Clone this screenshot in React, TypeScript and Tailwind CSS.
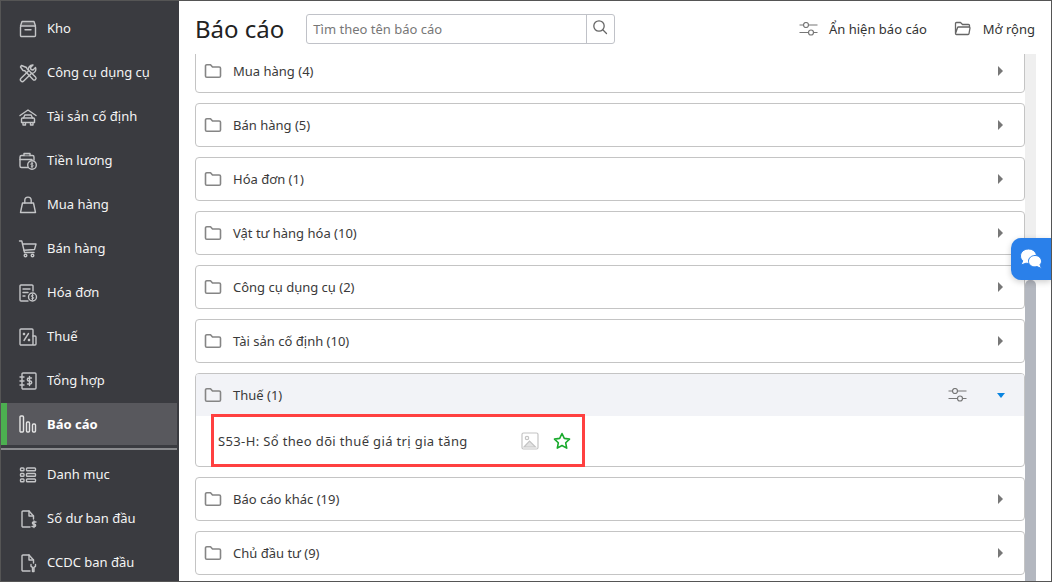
import React from "react";

const S = ({ children, className = "" }: { children: React.ReactNode; className?: string }) => (
  <svg width={20} height={20} viewBox="0 0 20 20" fill="none" stroke="currentColor" strokeWidth={1.4} strokeLinecap="round" strokeLinejoin="round" className={className}>
    {children}
  </svg>
);

const icons: Record<string, React.ReactNode> = {
  kho: (<><path d="M2.500 7 4 2.500h12L17.500 7" fill="#55565a" /><rect x="2.500" y="7" width="15" height="10.500" rx="1" /><path d="M7 10.800h6" /></>),
  tool: (<><path d="M3.500 2.500 2.500 4l2.500 3.500 1.800.3L15 16.500a1.700 1.700 0 0 0 2.500-2.500L9 5.800 8.500 4.500 3.500 2.500Z" /><path d="M17.500 4.500 15 7l-2-.5-.5-2L15 2a4.300 4.300 0 0 0-4.300 5.800L3 15.300A1.900 1.900 0 0 0 5.700 18l7.700-7.600a4.300 4.300 0 0 0 4.100-5.900Z" /></>),
  car: (<><path d="M2 8.500 10 3l8 5.500" /><path d="M5.500 11 6.800 8h6.400l1.300 3" /><path d="M3.500 12a1 1 0 0 1 1-1h11a1 1 0 0 1 1 1v3.500h-13ZM5 15.500V18h2.500v-2.500M12.500 15.500V18H15v-2.500" /></>),
  salary: (<><path d="M10 16.500H3.500a1.500 1.500 0 0 1-1.500-1.500V6a1.500 1.500 0 0 1 1.500-1.500h11A1.500 1.500 0 0 1 16 6v3" /><path d="M6 4.500V2.500h6v2" fill="#55565a" /><path d="M2 8.500h12" /><circle cx="14" cy="14" r="4.300" /><path d="M14.800 12.300h-1.400a.9.900 0 0 0 0 1.700h1.200a.9.900 0 0 1 0 1.700h-1.400M14 11.300v5.400" strokeWidth="1" /></>),
  bag: (<><path d="M4.500 8 2.500 17.500h15L15.500 8h-11Z" /><path d="M6.800 8V5.300a3.200 3.200 0 0 1 6.400 0V8" /></>),
  cart: (<><path d="M1.500 2H3.800L6.500 13.500h9.500" /><path d="M4.500 5H18l-1.500 5.500-10.500.8" /><circle cx="7.500" cy="16.500" r="1.300" /><circle cx="14.500" cy="16.500" r="1.300" /></>),
  invoice: (<><path d="M15 8V3a1 1 0 0 0-1-1H3a1 1 0 0 0-1 1v14a1 1 0 0 0 1 1h7" /><path d="M5 6h7M5 9.500h5M5 13h2" /><circle cx="14.500" cy="14" r="4" /><path d="M15.300 12.300h-1.400a.9.900 0 0 0 0 1.700h1.200a.9.900 0 0 1 0 1.700h-1.400M14.500 11.300v5.400" strokeWidth="1" /></>),
  tax: (<><rect x="2" y="2" width="13" height="16" rx="1" /><path d="M15 9h2a1 1 0 0 1 1 1v7a1 1 0 0 1-1 1h-2M6 13.500 10.500 6.500" /><path d="M5.500 6.500h1v1h-1ZM10.500 12.500h1v1h-1Z" /></>),
  book: (<><rect x="4" y="2" width="14" height="16" rx="1" /><path d="M2 6h4M2 10h4M2 14h4" /><path d="M13.500 7h-2.700a1.400 1.400 0 0 0 0 3h1.400a1.400 1.400 0 0 1 0 3H9.500M11.500 5.500v9" /></>),
  chart: (<><rect x="2" y="2" width="3.500" height="16" rx="1" /><rect x="8.500" y="8" width="3" height="10" rx="1" /><rect x="14.500" y="10" width="3" height="8" rx="1" /></>),
  list: (<><rect x="2.500" y="3" width="3.500" height="2.800" rx=".8" /><rect x="2.500" y="8.500" width="3.500" height="2.800" rx=".8" /><rect x="2.500" y="14" width="3.500" height="2.800" rx=".8" /><rect x="8.500" y="3" width="9" height="2.800" rx=".8" /><rect x="8.500" y="8.500" width="9" height="2.800" rx=".8" /><rect x="8.500" y="14" width="9" height="2.800" rx=".8" /></>),
  docDollar: (<><path d="M12 18H5a1 1 0 0 1-1-1V3a1 1 0 0 1 1-1h6l4.500 5v3" /><path d="M11 2v5h4.500" /><path d="M18 13h-2.500a1 1 0 0 0 0 2.200h1a1 1 0 0 1 0 2.300H14M16 12v6.500" /></>),
  docTool: (<><path d="M12 18H5a1 1 0 0 1-1-1V3a1 1 0 0 1 1-1h6l4.500 5v3" /><path d="M11 2v5h4.500" /><path d="M13 11.500v1.800l1.500 1V18.500h1.500v-4.200l1.500-1v-1.800" /></>),
};

const nav = [
  ["kho", "Kho"],
  ["tool", "Công cụ dụng cụ"],
  ["car", "Tài sản cố định"],
  ["salary", "Tiền lương"],
  ["bag", "Mua hàng"],
  ["cart", "Bán hàng"],
  ["invoice", "Hóa đơn"],
  ["tax", "Thuế"],
  ["book", "Tổng hợp"],
];
const nav2 = [
  ["list", "Danh mục"],
  ["docDollar", "Số dư ban đầu"],
  ["docTool", "CCDC ban đầu"],
];

const NavItem = ({ icon, label }: { icon: string; label: string }) => (
  <div className="flex h-[44px] shrink-0 items-center pl-[17px] text-[#f4f4f4]">
    <S className="h-[20px] w-[20px] text-[#c4c5c7]">{icons[icon]}</S>
    <span className="ml-[9px] text-[13px]">{label}</span>
  </div>
);

const Folder = () => (
  <svg width="18" height="16" viewBox="0 0 18 16" fill="none" stroke="#858585" strokeWidth="1.600" strokeLinejoin="round" className="shrink-0">
    <path d="M1.500 13V3a1.300 1.300 0 0 1 1.300-1.300h3.700L8.500 4h6.700a1.300 1.300 0 0 1 1.300 1.300V13a1.300 1.300 0 0 1-1.300 1.300H2.800A1.300 1.300 0 0 1 1.500 13Z" />
  </svg>
);

const Sliders = () => (
  <svg width="19" height="14" viewBox="0 0 19 14" fill="none" stroke="#777" strokeWidth="1.200" className="shrink-0">
    <circle cx="7" cy="3" r="2.500" />
    <circle cx="12" cy="10.500" r="2.500" />
    <path d="M.5 3h4M9.500 3h9M.5 10.500h9M14.500 10.500h4" />
  </svg>
);

const RightTri = () => <div className="h-0 w-0 border-y-[5px] border-l-[5px] border-y-transparent border-l-[#777]" />;

const Row = ({ label }: { label: string }) => (
  <div className="flex h-[44px] shrink-0 items-center rounded-[4px] border border-[#c4c4c4] bg-white pl-[8px] pr-[21px]">
    <Folder />
    <span className="ml-[11px] flex-1 pt-[2px] text-[13px] text-[#3a3a3a]">{label}</span>
    <RightTri />
  </div>
);

export default function App() {
  return (
    <div
      className="flex h-[582px] w-[1052px] overflow-hidden border border-[#555] bg-white"
      style={{ fontFamily: '"Noto Sans", sans-serif' }}
    >
      <aside className="flex w-[178px] shrink-0 flex-col overflow-hidden bg-[#3a3b40] pt-[6px]">
        {nav.map(([i, l]) => <NavItem key={l} icon={i} label={l} />)}
        <div className="mr-[2px] flex h-[42px] shrink-0 items-center bg-[#58585d] text-white">
          <div className="h-full w-[6px] bg-[#4caf50]" />
          <S className="ml-[11px] h-[20px] w-[20px] text-[#e4e4e4]">{icons.chart}</S>
          <span className="ml-[9px] pt-[2px] text-[13px] font-bold">Báo cáo</span>
        </div>
        <div className="mr-[2px] mt-[3px] h-[2px] shrink-0 bg-[#8a8b8e]" />
        <div className="mt-[3px] flex flex-col">
          {nav2.map(([i, l]) => <NavItem key={l} icon={i} label={l} />)}
        </div>
      </aside>

      <main className="relative flex min-w-0 flex-1 flex-col">
        <header className="flex h-[53px] shrink-0 items-center pl-[16px] pr-[16px] pt-[2px]">
          <h1 className="text-[24px] font-normal leading-none text-[#222]">Báo cáo</h1>
          <div className="ml-[22px] flex h-[30px] w-[309px] items-center rounded-[3px] border border-[#c0c2c8]">
            <span className="flex-1 pl-[6px] pt-[3px] text-[13px] text-[#777]">Tìm theo tên báo cáo</span>
            <div className="flex h-full w-[28px] items-center justify-center border-l border-[#c0c2c8] pb-[3px] pr-[2px]">
              <svg width="16" height="16" viewBox="0 0 16 16" fill="none" stroke="#666" strokeWidth="1.300" strokeLinecap="round">
                <circle cx="7" cy="7" r="5.200" />
                <path d="m11 11 3.500 3.500" />
              </svg>
            </div>
          </div>
          <div className="ml-auto flex items-center">
            <Sliders />
            <span className="ml-[11px] pt-[2px] text-[13px] text-[#333]">Ẩn hiện báo cáo</span>
            <svg width="18" height="15" viewBox="0 0 18 15" fill="none" stroke="#666" strokeWidth="1.300" strokeLinejoin="round" className="ml-[27px]">
              <path d="M1.500 12.500V2.500a1 1 0 0 1 1-1h4L8.500 3.500h6a1 1 0 0 1 1 1v1.500M1.500 12.500a1 1 0 0 0 1 1h11.500a1 1 0 0 0 1-.8l1-5.700a1 1 0 0 0-1-1H4.500a1 1 0 0 0-1 .8l-2 5.700Z" />
            </svg>
            <span className="ml-[11px] pt-[2px] text-[13px] text-[#333]">Mở rộng</span>
          </div>
        </header>

        <div className="flex min-h-0 flex-1 pl-[16px]">
          <div className="flex w-[830px] min-w-0 shrink-0 flex-col overflow-hidden">
            <div className="-mt-[5px] flex flex-col gap-[10px]">
              {["Mua hàng (4)", "Bán hàng (5)", "Hóa đơn (1)", "Vật tư hàng hóa (10)", "Công cụ dụng cụ (2)", "Tài sản cố định (10)"].map((l) => (
                <Row key={l} label={l} />
              ))}
              <div className="flex h-[94px] shrink-0 flex-col overflow-hidden rounded-[4px] border border-[#c4c4c4] bg-white">
                <div className="flex h-[42px] shrink-0 items-center bg-[#f2f3f7] pl-[8px] pr-[19px]">
                  <Folder />
                  <span className="ml-[11px] flex-1 pt-[2px] text-[13px] text-[#3a3a3a]">Thuế (1)</span>
                  <Sliders />
                  <div className="ml-[30px] h-0 w-0 border-x-[4px] border-t-[5px] border-x-transparent border-t-[#0a84e0]" />
                </div>
                <div className="flex flex-1 items-center pl-[22px]">
                  <span className="w-[303px] pt-[2px] text-[13px] tracking-[0.36px] text-[#3a3a3a]">S53-H: Sổ theo dõi thuế giá trị gia tăng</span>
                  <svg width="18" height="18" viewBox="0 0 18 18" fill="none" stroke="#c4c4c4" strokeWidth="1.200">
                    <rect x="1" y="1" width="16" height="16" rx="1.500" />
                    <circle cx="6" cy="6" r="1.700" />
                    <path d="M3 15l5.500-6 6 6Z" fill="#e2e2e2" />
                  </svg>
                  <svg width="18" height="18" viewBox="0 0 18 18" fill="none" stroke="#1aaa2d" strokeWidth="1.600" strokeLinejoin="round" className="ml-[14px]">
                    <path d="M9 1.500l2.300 4.900 5.200.7-3.800 3.700 1 5.300L9 13.500l-4.700 2.600 1-5.300L1.500 7.100l5.200-.7Z" />
                  </svg>
                </div>
              </div>
              {["Báo cáo khác (19)", "Chủ đầu tư (9)"].map((l) => (
                <Row key={l} label={l} />
              ))}
            </div>
          </div>
          <div className="flex w-[11px] shrink-0 flex-col">
            <div className="h-[226px] bg-[#efefef]" />
            <div className="flex-1 rounded-t-[5px] bg-[#b3b7bf]" />
          </div>
        </div>

        <div className="absolute left-[32px] top-[413px] h-[53px] w-[374px] border-[3px] border-[#ff4040]" />

        <div className="absolute right-0 top-[237px] flex h-[42px] w-[40px] items-center justify-center rounded-l-[10px] bg-[#2a80ea] shadow-[0_2px_6px_rgba(0,0,0,0.2)]">
          <svg width="24" height="22" viewBox="0 0 24 22" fill="white" stroke="#2a80ea" strokeWidth="1">
            <path d="M9.500 1C4.800 1 1.500 4.200 1.500 8c0 2 .9 3.600 2.200 4.800L2 17l5-1.800c.8.200 1.600.3 2.500.3 4.700 0 8-3.300 8-7.200S14.200 1 9.500 1Z" />
            <path d="M16 7.500c-3.600 0-6.500 2.500-6.500 5.700s2.900 5.700 6.500 5.700c.7 0 1.400-.1 2-.3l4.500 1.900-1.500-3.800c1-1 1.500-2.200 1.500-3.500 0-3.200-2.900-5.700-6.500-5.700Z" />
          </svg>
        </div>
      </main>
    </div>
  );
}
